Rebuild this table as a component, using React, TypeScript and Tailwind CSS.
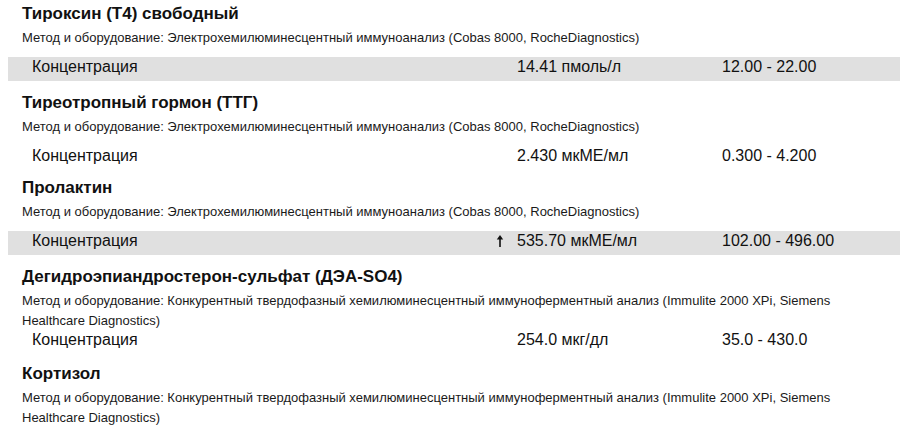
import React from 'react';

interface Test {
  title: string;
  method: string;
  value?: string;
  range?: string;
  high?: boolean;
  shaded?: boolean;
  methodH: string;
  rowH: string;
}

const COBAS = 'Метод и оборудование: Электрохемилюминесцентный иммуноанализ (Cobas 8000, RocheDiagnostics)';
const IMMULITE =
  'Метод и оборудование: Конкурентный твердофазный хемилюминесцентный иммуноферментный анализ (Immulite 2000 XPi, Siemens Healthcare Diagnostics)';

const tests: Test[] = [
  { title: 'Тироксин (Т4) свободный', method: COBAS, value: '14.41 пмоль/л', range: '12.00 - 22.00', shaded: true, methodH: 'h-[29px]', rowH: 'h-[24px]' },
  { title: 'Тиреотропный гормон (ТТГ)', method: COBAS, value: '2.430 мкМЕ/мл', range: '0.300 - 4.200', methodH: 'h-[29px]', rowH: 'h-[20px]' },
  { title: 'Пролактин', method: COBAS, value: '535.70 мкМЕ/мл', range: '102.00 - 496.00', high: true, shaded: true, methodH: 'h-[29px]', rowH: 'h-[24px]' },
  { title: 'Дегидроэпиандростерон-сульфат (ДЭА-SO4)', method: IMMULITE, value: '254.0 мкг/дл', range: '35.0 - 430.0', methodH: 'h-[39px]', rowH: 'h-[22px]' },
  { title: 'Кортизол', method: IMMULITE, methodH: 'h-[40px]', rowH: 'h-[20px]' },
];

function UpArrow() {
  return (
    <svg width="8" height="12" viewBox="0 0 8 12" className="mt-[4px] ml-[-1px]">
      <polygon points="4,0 7.2,4.6 0.8,4.6" fill="#111" />
      <rect x="3.2" y="4" width="1.6" height="8" fill="#111" />
    </svg>
  );
}

function TestBlock({ t }: { t: Test }) {
  return (
    <div className="mb-[12px]">
      <div className="pl-[22px] text-[17px] leading-[20px] font-bold text-[#111]">{t.title}</div>
      <div className={`mt-[4px] pl-[22px] w-[860px] text-[13px] leading-[20px] text-[#1a1a1a] ${t.methodH}`}>
        {t.method}
      </div>
      {t.value && (
        <div
          className={`ml-[8px] flex items-start text-[16px] leading-[20px] text-[#111] ${t.rowH} ${
            t.shaded ? 'bg-[#e0e0e0]' : ''
          }`}
        >
          <span className="pl-[24px] w-[489px]">Концентрация</span>
          <span className="w-[20px] flex">{t.high && <UpArrow />}</span>
          <span className="w-[205px]">{t.value}</span>
          <span>{t.range}</span>
        </div>
      )}
    </div>
  );
}

export default function App() {
  return (
    <div className="w-[900px] h-[441px] overflow-hidden bg-white pt-[4px] font-['Liberation_Sans',Arial,sans-serif]">
      {tests.map((t) => (
        <TestBlock key={t.title} t={t} />
      ))}
    </div>
  );
}
